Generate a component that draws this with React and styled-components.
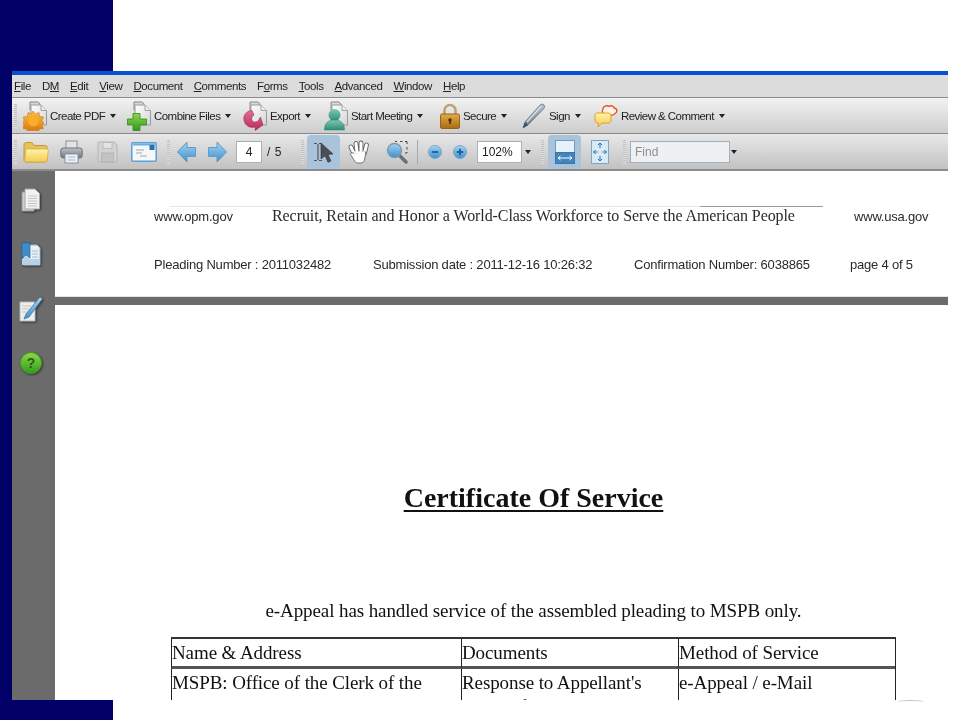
import React from "react";
import styled, { createGlobalStyle } from "styled-components";

const GlobalStyle = createGlobalStyle`
  html, body {
    margin: 0;
    padding: 0;
    background: #fff;
  }
`;

const spaced = (p) => `margin-left: ${p.$ml || 0}px;`;

const Slide = styled.div`
  position: relative;
  width: 960px;
  height: 720px;
  box-sizing: border-box;
  padding: 71px 12px 20px;
  overflow: hidden;
  background: linear-gradient(to right, #000066 113px, #fff 113px);
`;

const Window = styled.div`
  display: flex;
  flex-direction: column;
  height: 629px;
  background: #fff;
  border-top: 4px solid #0a50d2;
  box-sizing: border-box;
  filter: blur(0.3px);
`;

const MenuBar = styled.div`
  display: flex;
  align-items: center;
  flex: none;
  gap: 11px;
  height: 22px;
  padding: 0 2px;
  background: #dcdcdc;
  border-bottom: 1px solid #8c8c8c;
  font: 11.5px "Liberation Sans", Arial, sans-serif;
  letter-spacing: -0.4px;
  color: #222;
`;

const MenuItem = styled.span`
  white-space: nowrap;
  u {
    text-underline-offset: 1px;
  }
`;

const Toolbar = styled.div`
  display: flex;
  align-items: center;
  flex: none;
  box-sizing: border-box;
  height: ${(p) => p.$h}px;
  padding-left: 2px;
  background: linear-gradient(${(p) => p.$from}, ${(p) => p.$to});
  border-bottom: ${(p) => p.$line};
  font: 12px "Liberation Sans", Arial, sans-serif;
  color: #222;
`;

const TaskItem = styled.div`
  display: flex;
  align-items: center;
  flex: none;
  width: ${(p) => p.$w}px;
  ${spaced}
`;

const TaskLabel = styled.span`
  margin-left: 3px;
  white-space: nowrap;
  font-size: 11.5px;
  letter-spacing: -0.55px;
`;

const Caret = styled.span`
  flex: none;
  width: 0;
  height: 0;
  margin-left: ${(p) => p.$ml || 5}px;
  border-top: 4px solid #222;
  border-left: 3.5px solid transparent;
  border-right: 3.5px solid transparent;
`;

const Tool = styled.span`
  display: flex;
  flex: none;
  ${spaced}
`;

const Grip = styled.span`
  flex: none;
  width: 3px;
  height: ${(p) => p.$h || 24}px;
  ${spaced}
  background: repeating-linear-gradient(#c2c2c2 0 1px, #dedede 1px 2px);
`;

const Separator = styled.span`
  flex: none;
  width: 1px;
  height: 24px;
  ${spaced}
  background: #a8a8a8;
`;

const ActiveTool = styled.span`
  display: flex;
  align-items: center;
  justify-content: center;
  flex: none;
  width: 33px;
  height: 34px;
  ${spaced}
  background: #a9c4da;
  border-radius: 4px;
`;

const Field = styled.div`
  display: flex;
  align-items: center;
  justify-content: ${(p) => p.$justify || "flex-start"};
  flex: none;
  box-sizing: border-box;
  width: ${(p) => p.$w}px;
  height: 22px;
  padding: 0 4px;
  ${spaced}
  background: ${(p) => p.$bg || "#fff"};
  border: 1px solid ${(p) => p.$border || "#a4b2c0"};
  font-size: 12px;
  color: ${(p) => p.$color || "#222"};
`;

const PageCount = styled.span`
  flex: none;
  width: 17px;
  ${spaced}
  white-space: nowrap;
  word-spacing: 1px;
`;

const Body = styled.div`
  display: flex;
  flex: 1;
  min-height: 0;
`;

const SideBar = styled.aside`
  display: flex;
  flex-direction: column;
  align-items: center;
  flex: none;
  width: 43px;
  padding: 17px 5px 0 0;
  box-sizing: border-box;
  background: #6b6b6b;
  svg {
    margin-bottom: 30px;
    filter: drop-shadow(1px 1px 1px #333);
  }
`;

const Pages = styled.main`
  display: flex;
  flex-direction: column;
  flex: 1;
  min-width: 0;
  background: #fff;
`;

const HeaderPage = styled.section`
  flex: none;
  height: 126px;
  box-sizing: border-box;
  padding: 35px 0 0 99px;
  border-bottom: 1px solid #e4e4e4;
  position: relative;
`;

const FaintRule = styled.div`
  position: absolute;
  left: ${(p) => p.$l}px;
  width: ${(p) => p.$w}px;
  top: 35px;
  height: 1px;
  background: ${(p) => p.$c};
`;

const HeaderRow = styled.div`
  display: grid;
  grid-template-columns: ${(p) => p.$cols};
  align-items: center;
  height: ${(p) => p.$h}px;
  margin-bottom: ${(p) => p.$mb || 0}px;
`;

const SansText = styled.span`
  font: 13px "Liberation Sans", Arial, sans-serif;
  letter-spacing: -0.2px;
  color: #2a2a2a;
  white-space: nowrap;
`;

const SerifText = styled.span`
  font: 16px "Liberation Serif", "Times New Roman", serif;
  letter-spacing: -0.08px;
  color: #2a2a2a;
  white-space: nowrap;
`;

const PageGap = styled.div`
  flex: none;
  height: 8px;
  background: #6b6b6b;
`;

const CertificatePage = styled.section`
  flex: 1;
  min-height: 0;
  overflow: hidden;
  padding: 177px 0 0 116px;
  font-family: "Liberation Serif", "Times New Roman", serif;
  color: #111;
`;

const Title = styled.h1`
  width: 725px;
  margin: 0;
  text-align: center;
  font-size: 28px;
  line-height: 32px;
  font-weight: bold;
  text-decoration: underline;
  text-decoration-thickness: 2px;
  text-underline-offset: 3px;
`;

const Notice = styled.p`
  width: 725px;
  margin: 85px 0 0;
  text-align: center;
  font-size: 19px;
  line-height: 24px;
  letter-spacing: -0.1px;
`;

const ServiceTable = styled.div`
  display: grid;
  grid-template-columns: 290px 217px 217px;
  width: 724px;
  margin-top: 14px;
  border-top: 2px solid #333;
  border-right: 1px solid #222;
  font-size: 19px;
  line-height: 24px;
  letter-spacing: -0.1px;
`;

const Cell = styled.div`
  box-sizing: border-box;
  height: ${(p) => p.$h}px;
  padding-top: ${(p) => p.$pt}px;
  border-left: 1px solid #222;
  border-bottom: ${(p) => (p.$head ? "3px solid #555" : "none")};
  white-space: nowrap;
  overflow: hidden;
`;

const Smudge = styled.div`
  position: absolute;
  left: 898px;
  top: 700px;
  width: 26px;
  height: 3px;
  border-top: 1px solid #c4c4c4;
  border-radius: 50%;
`;

const Defs = () => (
  <svg width="0" height="0" style={{ position: "absolute" }}>
    <defs>
      <linearGradient id="doc" x1="0" y1="0" x2="1" y2="1"><stop offset="0" stopColor="#ffffff" /><stop offset="1" stopColor="#d4d4d4" /></linearGradient>
      <linearGradient id="sun" x1="0" y1="0" x2="0" y2="1"><stop offset="0" stopColor="#fbc34a" /><stop offset="1" stopColor="#dd7a10" /></linearGradient>
      <linearGradient id="grn" x1="0" y1="0" x2="0" y2="1"><stop offset="0" stopColor="#8fd84a" /><stop offset="1" stopColor="#2f9a1e" /></linearGradient>
      <linearGradient id="pnk" x1="0" y1="0" x2="0" y2="1"><stop offset="0" stopColor="#e56d92" /><stop offset="1" stopColor="#b52a58" /></linearGradient>
      <linearGradient id="tea" x1="0" y1="0" x2="0" y2="1"><stop offset="0" stopColor="#7cc9ae" /><stop offset="1" stopColor="#2e8d78" /></linearGradient>
      <linearGradient id="gld" x1="0" y1="0" x2="0" y2="1"><stop offset="0" stopColor="#e3ac45" /><stop offset="1" stopColor="#a86c14" /></linearGradient>
      <linearGradient id="yel" x1="0" y1="0" x2="0" y2="1"><stop offset="0" stopColor="#fff3ac" /><stop offset="1" stopColor="#f4cc4c" /></linearGradient>
      <linearGradient id="blu" x1="0" y1="0" x2="0" y2="1"><stop offset="0" stopColor="#a6d4f2" /><stop offset="1" stopColor="#3f8fca" /></linearGradient>
      <linearGradient id="gry" x1="0" y1="0" x2="0" y2="1"><stop offset="0" stopColor="#bcc2c8" /><stop offset="1" stopColor="#6f7880" /></linearGradient>
    </defs>
  </svg>
);

const BackDoc = () => (
  <>
    <path d="M7 1h8l2 2v6H7z" fill="#d8d8d8" stroke="#8a8a8a" />
    <path d="M8 4h10l5.500 5.500V24H8z" fill="url(#doc)" stroke="#9a9a9a" />
    <path d="M18 4v5.500h5.500" fill="#eee" stroke="#a4a4a4" />
  </>
);

const CreatePdfIcon = () => (
  <svg width="24" height="30" viewBox="0 0 24 30">
    <BackDoc />
    <path d="M10 10l2.500 3 3.500-1.500.5 4 4 .5-1.500 3.500 2 2.500-2 2.500 1.500 3-4 .5-.5 1.500h-12l-.5-1.500-4-.5 1.500-3-2-2.500 2-2.500L.5 16l4-.5.5-4 3.500 1.500z" fill="url(#sun)" stroke="#c8760f" strokeWidth=".6" />
    <circle cx="10.500" cy="20.500" r="5" fill="#f7ae2a" />
  </svg>
);

const CombineIcon = () => (
  <svg width="24" height="30" viewBox="0 0 24 30">
    <BackDoc />
    <path d="M6 12.500h7V18h6.500v6H13v5.500H6V24H.5v-6H6z" fill="url(#grn)" stroke="#2d8a1c" strokeWidth=".8" />
  </svg>
);

const ExportIcon = () => (
  <svg width="24" height="30" viewBox="0 0 24 30">
    <BackDoc />
    <path d="M9 9.500C3 10 0 14.500 1 19.500c1 5 6 8 11.500 6.500l-.5 3.500 8-5.500-2.500-8-2 3.500c-2 2-5 2-6.500 0-1-2 0-4.500 2-5.500z" fill="url(#pnk)" stroke="#a52850" strokeWidth=".6" />
  </svg>
);

const MeetingIcon = () => (
  <svg width="24" height="30" viewBox="0 0 24 30">
    <BackDoc />
    <circle cx="10.500" cy="14" r="6" fill="url(#tea)" />
    <path d="M.5 29c0-7 3.500-10 10-10s10 3 10 10z" fill="url(#tea)" stroke="#2d7f6c" strokeWidth=".5" />
  </svg>
);

const LockIcon = () => (
  <svg width="20" height="26" viewBox="0 0 20 26">
    <path d="M4.500 12V7.500a5.500 5.500 0 0 1 11 0V12" fill="none" stroke="#bba470" strokeWidth="2.600" />
    <rect x=".5" y="11" width="19" height="14.500" rx="1.500" fill="url(#gld)" stroke="#96651a" />
    <circle cx="10" cy="17" r="1.800" fill="#4d3307" />
    <rect x="9.200" y="17" width="1.600" height="4" fill="#4d3307" />
  </svg>
);

const PenIcon = () => (
  <svg width="24" height="26" viewBox="0 0 24 26">
    <path d="M1 25l2-6L18 2c1-1.300 4-1.300 4.500 1 .3 1-.2 2-1 3L6 22z" fill="url(#gry)" stroke="#5b6f84" strokeWidth=".7" />
    <path d="M5 19L19 3.500" stroke="#d8e4ee" strokeWidth="1.300" />
    <path d="M1 25l2-6 3 3z" fill="#38506a" />
  </svg>
);

const ReviewIcon = () => (
  <svg width="24" height="24" viewBox="0 0 24 24">
    <path d="M9 5c0-3 4-4 6-2.500 2-1.500 5-.5 5 1.500 3 0 4 4 1 5.500-1 2-4 2-5.500 1H11C8 10 8 7 9 5z" fill="#fff3e6" stroke="#e0541c" strokeWidth="1.300" />
    <path d="M3 9h11c2 0 3 1 3 3v4c0 2-1 3-3 3H8l-4 4 .5-4C2 19 1 18 1 16v-4c0-2 1-3 2-3z" fill="url(#yel)" stroke="#e0a020" />
  </svg>
);

const FolderIcon = () => (
  <svg width="26" height="22" viewBox="0 0 26 22">
    <path d="M1 4c0-1.500 1-2.500 2-2.500h6l2 3h11c1.500 0 2 1 2 2V19c0 1-.5 2-2 2H3c-1 0-2-1-2-2z" fill="#e7c15a" stroke="#c09a3c" />
    <path d="M1.500 20L3 8h20.500c1 0 2 1 1.800 2L24 20c0 .7-1 1-2 1H3c-1 0-1.500-.5-1.500-1z" fill="url(#yel)" stroke="#cfa94a" strokeWidth=".7" />
  </svg>
);

const PrinterIcon = () => (
  <svg width="23" height="24" viewBox="0 0 23 24">
    <rect x="6" y="1" width="11" height="8" fill="#e4e4e4" stroke="#8a9097" />
    <rect x=".8" y="8" width="21.400" height="10" rx="2.500" fill="url(#gry)" stroke="#6b747c" />
    <rect x="5" y="14" width="13" height="9" fill="#f0f4f8" stroke="#8a9097" />
    <path d="M7.500 17h8M7.500 20h8" stroke="#9fb4c6" />
  </svg>
);

const SaveIcon = () => (
  <svg width="21" height="22" viewBox="0 0 21 22">
    <path d="M1 2c0-.7.4-1 1-1h15l3 3v16c0 .6-.4 1-1 1H2c-.6 0-1-.4-1-1z" fill="#d2d2d2" stroke="#b5b5b5" />
    <rect x="6" y="1.500" width="9" height="6" fill="#e2e2e2" stroke="#bcbcbc" />
    <rect x="4.500" y="12" width="12" height="9" fill="#c2c2c2" stroke="#b5b5b5" />
  </svg>
);

const MailIcon = () => (
  <svg width="26" height="20" viewBox="0 0 26 20">
    <rect x=".8" y=".8" width="24.400" height="18.400" rx="1" fill="#f4f8fb" stroke="#5f9fd0" strokeWidth="1.500" />
    <path d="M2 1.500h22v2H2z" fill="#6fb0de" />
    <rect x="18.500" y="3" width="5" height="5" fill="#2a6fb0" />
    <path d="M5 8h8M5 11h6M9 14h7" stroke="#9ca6ae" />
  </svg>
);

const ArrowIcon = ({ right }) => (
  <svg width="19" height="22" viewBox="0 0 19 22">
    <path
      d={right ? "M9 1l9.500 10L9 21v-5.500H.5v-9H9z" : "M10 1L.5 11 10 21v-5.500h8.500v-9H10z"}
      fill="url(#blu)"
      stroke="#5c9ccf"
    />
  </svg>
);

const SelectIcon = () => (
  <svg width="22" height="22" viewBox="0 0 22 22">
    <path d="M1 2.500h3M6 2.500h3M5 3v16M1 19.500h3M6 19.500h3" fill="none" stroke="#555" strokeWidth="1.200" />
    <path d="M8 2l12 11-5 .5 3 6.500-3 1.300-3-6.500L8 18z" fill="#4a4f55" stroke="#30343a" strokeWidth=".6" />
  </svg>
);

const HandIcon = () => {
  const fingers = "M6 14L3 7M9 12L8 3.500M13 12V3M16.500 13l2-8";
  return (
    <svg width="22" height="24" viewBox="0 0 22 24">
      <g strokeLinecap="round" fill="none">
        <path d={fingers} stroke="#666" strokeWidth="4.800" />
        <path d={fingers} stroke="#fff" strokeWidth="3" />
      </g>
      <path d="M5 13l13-1-1.500 8c-.5 2-2 3-4 3H10c-2 0-3-1-4-3l-3.500-5.500c-.5-1 1-2 2.500-1.500z" fill="#fff" stroke="#666" strokeWidth=".9" />
      <path d="M6 12.500h11" stroke="#fff" strokeWidth="2" />
    </svg>
  );
};

const ZoomIcon = () => (
  <svg width="22" height="24" viewBox="0 0 22 24">
    <path d="M9 1.500h2M14 1.500h2.500M19 1.500h2v2.500M21 7v2.500M21 12v1h-2" fill="none" stroke="#444" />
    <path d="M13 15l7 7" stroke="#6b6f74" strokeWidth="3.500" strokeLinecap="round" />
    <circle cx="8.500" cy="10.500" r="7" fill="url(#blu)" stroke="#7f97ad" strokeWidth="1.300" />
  </svg>
);

const ZoomStepIcon = ({ plus }) => (
  <svg width="14" height="14" viewBox="0 0 14 14">
    <circle cx="7" cy="7" r="6.500" fill="url(#blu)" stroke="#7aa7cc" />
    <path d={plus ? "M3.800 7h6.400M7 3.800v6.400" : "M3.800 7h6.400"} stroke="#1c5f99" strokeWidth="1.800" />
  </svg>
);

const FitWidthIcon = () => (
  <svg width="20" height="24" viewBox="0 0 20 24">
    <rect x=".5" y=".5" width="19" height="12" fill="#e8f2fa" stroke="#6f9cc4" />
    <rect x=".5" y="12.500" width="19" height="11" fill="#3f86be" stroke="#3a77a8" />
    <path d="M3 18h14M3 18l2.500-2M3 18l2.500 2M17 18l-2.500-2M17 18l-2.500 2" stroke="#fff" />
  </svg>
);

const FitPageIcon = () => (
  <svg width="18" height="24" viewBox="0 0 18 24">
    <rect x=".5" y=".5" width="17" height="23" fill="#d9eaf7" stroke="#7da7ca" />
    <path d="M9 3v5M9 3L7 5M9 3l2 2M9 16v5M9 21l-2-2M9 21l2-2M2.500 12h4M2.500 12l2-2M2.500 12l2 2M11.500 12h4M15.500 12l-2-2M15.500 12l-2 2" stroke="#2a70a8" fill="none" />
  </svg>
);

const PagesIcon = () => (
  <svg width="20" height="24" viewBox="0 0 20 24">
    <path d="M1 4h12v19H1z" fill="#cfcfcf" stroke="#999" />
    <path d="M4 1h10l4.500 4.500V21H4z" fill="#f1f1f1" stroke="#aaa" />
    <path d="M7 8h9M7 10.500h9M7 13h9M7 15.500h9M7 18h9" stroke="#c4c4c4" />
  </svg>
);

const BookmarkIcon = () => (
  <svg width="20" height="24" viewBox="0 0 20 24">
    <path d="M3 3h13l3 3v17H3z" fill="#e9f1f8" stroke="#9db8d0" />
    <path d="M1 1h8v15l-4-3-4 3z" fill="#3f8ccc" stroke="#256a9f" strokeWidth=".7" />
    <path d="M1 23v-6l4-3 4 3h10v6z" fill="#b6d3ea" />
    <path d="M11 9h6M11 12h6M11 15h6" stroke="#a8bccd" />
  </svg>
);

const SignIcon = () => (
  <svg width="24" height="26" viewBox="0 0 24 26">
    <path d="M1 6h15v19H1z" fill="#eeeeee" stroke="#bbb" />
    <path d="M3 10h9M3 13h7M3 16h5" stroke="#c4c4c4" />
    <path d="M5 23l2-5L20 2c1-1 3.500-.5 3 1.500L10 21z" fill="url(#blu)" stroke="#3c6e99" strokeWidth=".7" />
  </svg>
);

const HelpIcon = () => (
  <svg width="22" height="22" viewBox="0 0 22 22">
    <circle cx="11" cy="11" r="10.500" fill="url(#grn)" stroke="#4b9c1e" />
    <text x="11" y="16" textAnchor="middle" fontFamily="Liberation Sans, Arial, sans-serif" fontWeight="bold" fontSize="14" fill="#2b5a10">?</text>
  </svg>
);

const menus = [
  ["", "F", "ile"],
  ["D", "M", ""],
  ["", "E", "dit"],
  ["", "V", "iew"],
  ["", "D", "ocument"],
  ["", "C", "omments"],
  ["F", "o", "rms"],
  ["", "T", "ools"],
  ["", "A", "dvanced"],
  ["", "W", "indow"],
  ["", "H", "elp"],
];

const tasks = [
  { label: "Create PDF", w: 104, ml: 6, icon: <CreatePdfIcon /> },
  { label: "Combine Files", w: 116, icon: <CombineIcon /> },
  { label: "Export", w: 81, icon: <ExportIcon /> },
  { label: "Start Meeting", w: 116, icon: <MeetingIcon /> },
  { label: "Secure", w: 82, icon: <LockIcon /> },
  { label: "Sign", w: 72, icon: <PenIcon /> },
  { label: "Review & Comment", w: 140, icon: <ReviewIcon /> },
];

export default function App() {
  return (
    <Slide>
      <GlobalStyle />
      <Defs />
      <Window>
        <MenuBar>
          {menus.map(([before, key, after]) => (
            <MenuItem key={before + key + after}>
              {before}
              <u>{key}</u>
              {after}
            </MenuItem>
          ))}
        </MenuBar>
        <Toolbar $h={36} $from="#f2f2f2" $to="#cdcdcd" $line="1px solid #8a8a8a">
          <Grip />
          {tasks.map((t) => (
            <TaskItem key={t.label} $w={t.w} $ml={t.ml}>
              {t.icon}
              <TaskLabel>{t.label}</TaskLabel>
              <Caret />
            </TaskItem>
          ))}
        </Toolbar>
        <Toolbar $h={37} $from="#e8e8e8" $to="#c2c2c2" $line="2px solid #8c8c8c">
          <Grip />
          <Tool $ml={6}><FolderIcon /></Tool>
          <Tool $ml={11}><PrinterIcon /></Tool>
          <Tool $ml={14}><SaveIcon /></Tool>
          <Tool $ml={13}><MailIcon /></Tool>
          <Grip $ml={10} />
          <Tool $ml={7}><ArrowIcon /></Tool>
          <Tool $ml={12}><ArrowIcon right /></Tool>
          <Field $ml={9} $w={26} $justify="center">4</Field>
          <PageCount $ml={5}>/ 5</PageCount>
          <Grip $ml={17} />
          <ActiveTool $ml={3}><SelectIcon /></ActiveTool>
          <Tool $ml={8}><HandIcon /></Tool>
          <Tool $ml={16}><ZoomIcon /></Tool>
          <Separator $ml={9} />
          <Tool $ml={10}><ZoomStepIcon /></Tool>
          <Tool $ml={11}><ZoomStepIcon plus /></Tool>
          <Field $ml={10} $w={45}>102%</Field>
          <Caret $ml={3} />
          <Grip $ml={10} />
          <ActiveTool $ml={4}><FitWidthIcon /></ActiveTool>
          <Tool $ml={10}><FitPageIcon /></Tool>
          <Grip $ml={14} />
          <Field $ml={4} $w={100} $bg="#eef1f4" $border="#9fb0c0" $color="#8f8f8f">Find</Field>
          <Caret $ml={1} />
        </Toolbar>
        <Body>
          <SideBar>
            <PagesIcon />
            <BookmarkIcon />
            <SignIcon />
            <HelpIcon />
          </SideBar>
          <Pages>
            <HeaderPage>
              <FaintRule $l={115} $w={530} $c="#e6e6e6" />
              <FaintRule $l={645} $w={123} $c="#9a9a9a" />
              <HeaderRow $h={20} $mb={28} $cols="118px 582px auto">
                <SansText>www.opm.gov</SansText>
                <SerifText>Recruit, Retain and Honor a World-Class Workforce to Serve the American People</SerifText>
                <SansText>www.usa.gov</SansText>
              </HeaderRow>
              <HeaderRow $h={20} $cols="219px 261px 216px auto">
                <SansText>Pleading Number : 2011032482</SansText>
                <SansText>Submission date : 2011-12-16 10:26:32</SansText>
                <SansText>Confirmation Number: 6038865</SansText>
                <SansText>page 4 of 5</SansText>
              </HeaderRow>
            </HeaderPage>
            <PageGap />
            <CertificatePage>
              <Title>Certificate Of Service</Title>
              <Notice>e-Appeal has handled service of the assembled pleading to MSPB only.</Notice>
              <ServiceTable>
                <Cell $head $h={30} $pt={2}>Name &amp; Address</Cell>
                <Cell $head $h={30} $pt={2}>Documents</Cell>
                <Cell $head $h={30} $pt={2}>Method of Service</Cell>
                <Cell $h={60} $pt={2}>MSPB: Office of the Clerk of the<br />Board</Cell>
                <Cell $h={60} $pt={2}>Response to Appellant's<br />motion for sanctions, dated</Cell>
                <Cell $h={60} $pt={2}>e-Appeal / e-Mail</Cell>
              </ServiceTable>
            </CertificatePage>
          </Pages>
        </Body>
      </Window>
      <Smudge />
    </Slide>
  );
}
